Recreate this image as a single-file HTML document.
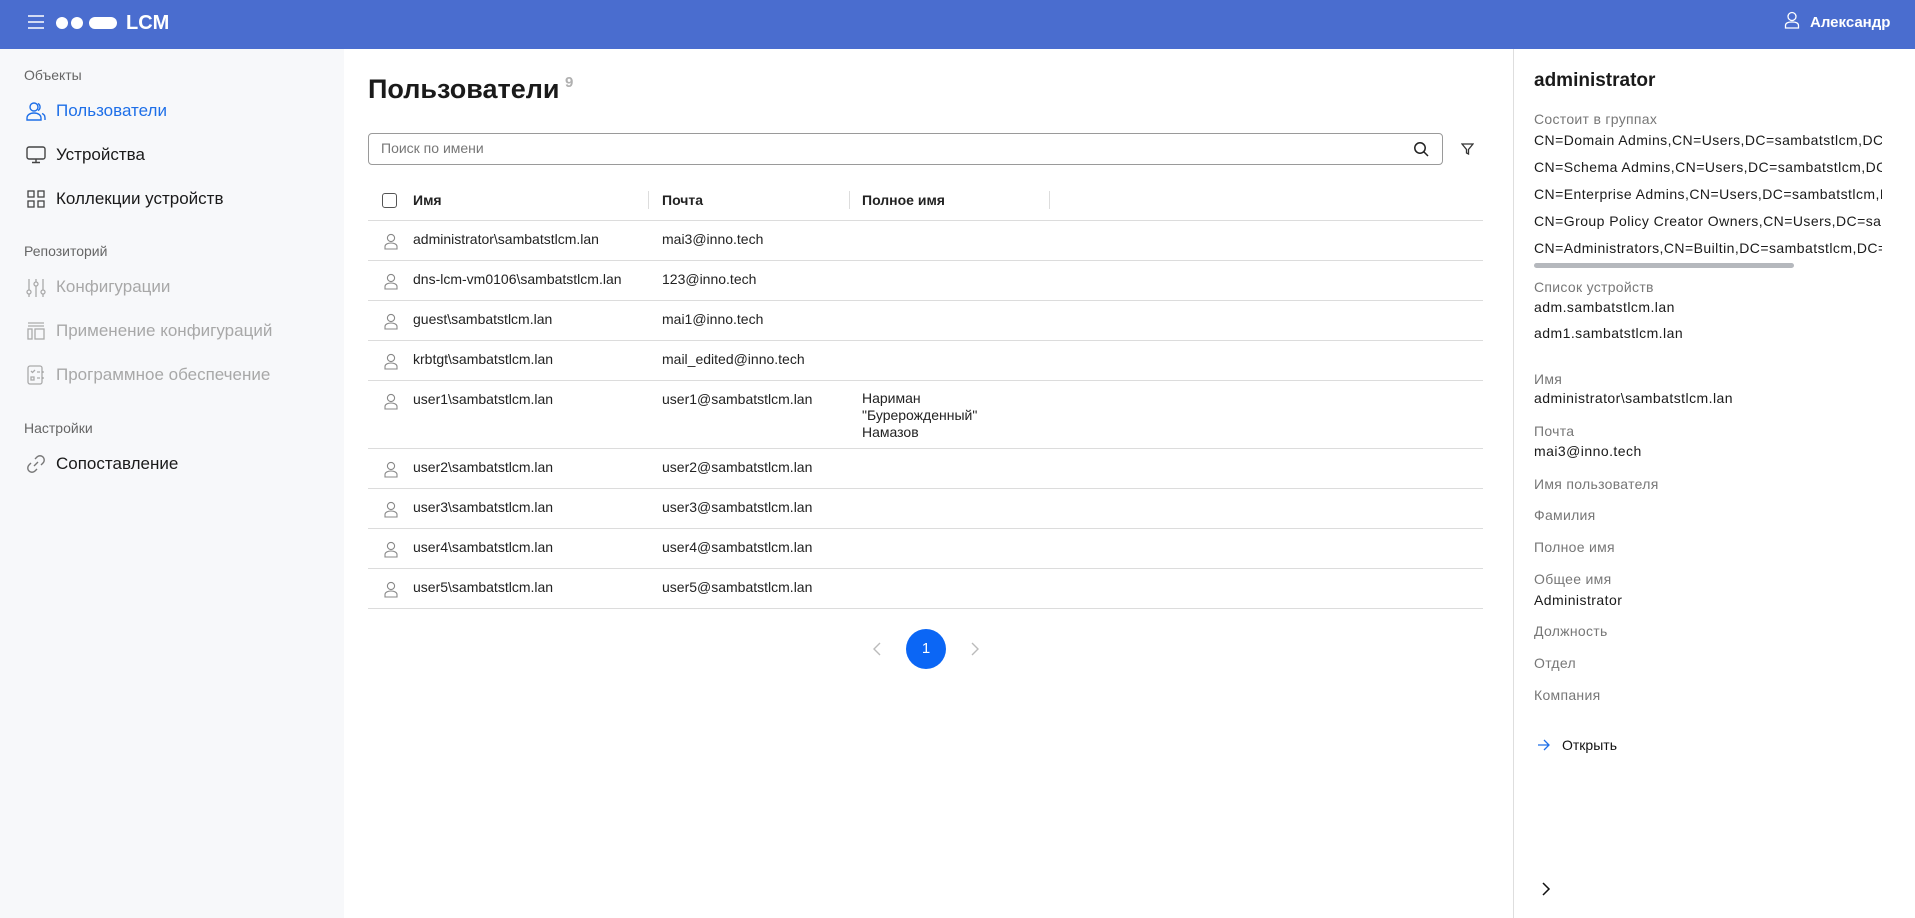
<!DOCTYPE html>
<html><head><meta charset="utf-8">
<style>
*{margin:0;padding:0;box-sizing:border-box}
body{width:1915px;height:918px;overflow:hidden;background:#fff;font-family:"Liberation Sans",Arial,sans-serif;color:#1f1f1f;position:relative}
.a{position:absolute;white-space:nowrap}
.hdr{position:absolute;left:0;top:0;width:1915px;height:49px;background:#4a6dcf}
.side{position:absolute;left:0;top:49px;width:344px;height:869px;background:#f7f8fa}
.sec{font-size:14px;color:#666}
.nav{font-size:17px;color:#1a1a1a}
.dis{color:#a8a8a8}
.ic{position:absolute}
.row{position:absolute;left:368px;width:1115px;border-bottom:1px solid #dcdcdc}
.cell{position:absolute;font-size:14px;color:#222;line-height:19px}
.rp{position:absolute;left:1513px;top:49px;width:402px;height:869px;border-left:1px solid #dedede}
.lb{font-size:14px;color:#777;letter-spacing:0.3px}
.vl{font-size:14px;color:#1a1a1a;letter-spacing:0.45px}
</style></head><body>
<div class="hdr">
 <svg class="ic" style="left:27px;top:14px" width="18" height="16" viewBox="0 0 18 16"><path d="M1 2h16M1 8h16M1 14h16" stroke="#fff" stroke-width="1.5"/></svg>
 <div class="a" style="left:56px;top:17px;width:12px;height:12px;border-radius:6px;background:#fff"></div>
 <div class="a" style="left:71px;top:17px;width:12px;height:12px;border-radius:6px;background:#fff"></div>
 <div class="a" style="left:89px;top:17px;width:28px;height:12px;border-radius:6px;background:#fff"></div>
 <div class="a" style="left:126px;top:12px;font-size:20px;font-weight:bold;color:#fff">LCM</div>
 <svg class="ic" style="left:1784px;top:11px" width="16" height="18" viewBox="0 0 16 18"><circle cx="8" cy="5.5" r="4" fill="none" stroke="#fff" stroke-width="1.3"/><path d="M1.5 17v-2.5c0-2 2-3.5 6.5-3.5s6.5 1.5 6.5 3.5V17z" fill="none" stroke="#fff" stroke-width="1.3"/></svg>
 <div class="a" style="left:1810px;top:14px;font-size:15px;font-weight:bold;color:#fff">Александр</div>
</div>
<div class="side">
 <div class="a sec" style="left:24px;top:18px">Объекты</div>
 <svg class="ic" style="left:26px;top:52px" width="20" height="20" viewBox="0 0 20 20"><circle cx="8" cy="6" r="4" fill="none" stroke="#1e6fe8" stroke-width="1.4"/><path d="M1 19v-2c0-3 3-5 7-5s7 2 7 5v2zM12 2.5a4 4 0 0 1 0 7M16 12.5c2 .7 3 2.3 3 4.5v2" fill="none" stroke="#1e6fe8" stroke-width="1.4"/></svg>
 <div class="a nav" style="left:56px;top:52px;color:#1e6fe8">Пользователи</div>
 <svg class="ic" style="left:26px;top:97px" width="20" height="18" viewBox="0 0 20 18"><rect x="1" y="1" width="18" height="12" rx="2" fill="none" stroke="#444" stroke-width="1.4"/><path d="M10 13v3M6 16.5h8" stroke="#444" stroke-width="1.4"/></svg>
 <div class="a nav" style="left:56px;top:96px">Устройства</div>
 <svg class="ic" style="left:27px;top:141px" width="18" height="18" viewBox="0 0 18 18"><g fill="none" stroke="#444" stroke-width="1.3"><rect x="1" y="1" width="6" height="6"/><rect x="11" y="1" width="6" height="6"/><rect x="1" y="11" width="6" height="6"/><rect x="11" y="11" width="6" height="6"/></g></svg>
 <div class="a nav" style="left:56px;top:140px">Коллекции устройств</div>
 <div class="a sec" style="left:24px;top:194px">Репозиторий</div>
 <svg class="ic" style="left:26px;top:229px" width="20" height="20" viewBox="0 0 20 20"><g fill="none" stroke="#aaa" stroke-width="1.3"><path d="M3 1v11M3 16v3M10 1v3M10 8v11M17 1v11M17 16v3"/><circle cx="3" cy="14" r="2"/><circle cx="10" cy="6" r="2"/><circle cx="17" cy="14" r="2"/></g></svg>
 <div class="a nav dis" style="left:56px;top:228px">Конфигурации</div>
 <svg class="ic" style="left:27px;top:273px" width="18" height="18" viewBox="0 0 18 18"><g fill="none" stroke="#aaa" stroke-width="1.3"><path d="M1 1h16M1 4h16"/><rect x="1" y="7" width="4" height="10"/><rect x="8" y="7" width="9" height="10"/></g></svg>
 <div class="a nav dis" style="left:56px;top:272px">Применение конфигураций</div>
 <svg class="ic" style="left:27px;top:316px" width="18" height="20" viewBox="0 0 18 20"><g fill="none" stroke="#aaa" stroke-width="1.3"><rect x="1" y="1" width="14" height="18" rx="2"/><path d="M4 6l1.5 1.5L8 5M10 7h3M4 12h3v3H4zM10 13h3M16 6v2M16 12v2"/></g></svg>
 <div class="a nav dis" style="left:56px;top:316px">Программное обеспечение</div>
 <div class="a sec" style="left:24px;top:371px">Настройки</div>
 <svg class="ic" style="left:26px;top:405px" width="20" height="20" viewBox="0 0 20 20"><g fill="none" stroke="#777" stroke-width="1.4"><path d="M8 12l4-4M9 5l2-2a4 4 0 0 1 6 6l-2 2M11 15l-2 2a4 4 0 0 1-6-6l2-2"/></g></svg>
 <div class="a nav" style="left:56px;top:405px">Сопоставление</div>
</div>

<div class="a" style="left:368px;top:74px;font-size:27px;font-weight:bold;color:#1a1a1a">Пользователи</div>
<div class="a" style="left:565px;top:74px;font-size:15px;font-weight:bold;color:#b0b0b0">9</div>
<div class="a" style="left:368px;top:133px;width:1075px;height:32px;border:1px solid #9a9a9a;border-radius:4px"></div>
<div class="a" style="left:381px;top:140px;font-size:14px;color:#777">Поиск по имени</div>
<svg class="ic" style="left:1413px;top:141px" width="16" height="16" viewBox="0 0 16 16"><circle cx="7" cy="7" r="5.2" fill="none" stroke="#222" stroke-width="1.5"/><path d="M11 11l4 4" stroke="#222" stroke-width="1.5"/></svg>
<svg class="ic" style="left:1461px;top:143px" width="13" height="12" viewBox="0 0 13 12"><path d="M1 1h11L7.5 6.5V11L5.5 10V6.5z" fill="none" stroke="#333" stroke-width="1.3"/></svg>

<div class="row" style="top:180px;height:41px"></div>
<div class="a" style="left:382px;top:193px;width:15px;height:15px;border:1.3px solid #555;border-radius:3px"></div>
<div class="cell" style="left:413px;top:191px;font-weight:bold">Имя</div>
<div class="a" style="left:648px;top:191px;width:1px;height:18px;background:#ddd"></div>
<div class="cell" style="left:662px;top:191px;font-weight:bold">Почта</div>
<div class="a" style="left:849px;top:191px;width:1px;height:18px;background:#ddd"></div>
<div class="cell" style="left:862px;top:191px;font-weight:bold">Полное имя</div>
<div class="a" style="left:1049px;top:191px;width:1px;height:18px;background:#ddd"></div>

<div class="row" style="top:221px;height:40px"></div>
<div class="row" style="top:261px;height:40px"></div>
<div class="row" style="top:301px;height:40px"></div>
<div class="row" style="top:341px;height:40px"></div>
<div class="row" style="top:381px;height:68px"></div>
<div class="row" style="top:449px;height:40px"></div>
<div class="row" style="top:489px;height:40px"></div>
<div class="row" style="top:529px;height:40px"></div>
<div class="row" style="top:569px;height:40px"></div>

<svg width="0" height="0" style="position:absolute"><defs><g id="u"><circle cx="7" cy="5" r="3.6" fill="none" stroke="#888" stroke-width="1.1"/><path d="M1 16v-2.5c0-2 2.5-3.5 6-3.5s6 1.5 6 3.5V16z" fill="none" stroke="#888" stroke-width="1.1"/></g></defs></svg>
<svg class="ic" style="left:384px;top:233px" width="14" height="17"><use href="#u"/></svg>
<svg class="ic" style="left:384px;top:273px" width="14" height="17"><use href="#u"/></svg>
<svg class="ic" style="left:384px;top:313px" width="14" height="17"><use href="#u"/></svg>
<svg class="ic" style="left:384px;top:353px" width="14" height="17"><use href="#u"/></svg>
<svg class="ic" style="left:384px;top:393px" width="14" height="17"><use href="#u"/></svg>
<svg class="ic" style="left:384px;top:461px" width="14" height="17"><use href="#u"/></svg>
<svg class="ic" style="left:384px;top:501px" width="14" height="17"><use href="#u"/></svg>
<svg class="ic" style="left:384px;top:541px" width="14" height="17"><use href="#u"/></svg>
<svg class="ic" style="left:384px;top:581px" width="14" height="17"><use href="#u"/></svg>

<div class="cell" style="left:413px;top:230px">administrator\sambatstlcm.lan</div><div class="cell" style="left:662px;top:230px">mai3@inno.tech</div>
<div class="cell" style="left:413px;top:270px">dns-lcm-vm0106\sambatstlcm.lan</div><div class="cell" style="left:662px;top:270px">123@inno.tech</div>
<div class="cell" style="left:413px;top:310px">guest\sambatstlcm.lan</div><div class="cell" style="left:662px;top:310px">mai1@inno.tech</div>
<div class="cell" style="left:413px;top:350px">krbtgt\sambatstlcm.lan</div><div class="cell" style="left:662px;top:350px">mail_edited@inno.tech</div>
<div class="cell" style="left:413px;top:390px">user1\sambatstlcm.lan</div><div class="cell" style="left:662px;top:390px">user1@sambatstlcm.lan</div>
<div class="cell" style="left:862px;top:390px;white-space:normal;line-height:17px">Нариман<br>"Бурерожденный"<br>Намазов</div>
<div class="cell" style="left:413px;top:458px">user2\sambatstlcm.lan</div><div class="cell" style="left:662px;top:458px">user2@sambatstlcm.lan</div>
<div class="cell" style="left:413px;top:498px">user3\sambatstlcm.lan</div><div class="cell" style="left:662px;top:498px">user3@sambatstlcm.lan</div>
<div class="cell" style="left:413px;top:538px">user4\sambatstlcm.lan</div><div class="cell" style="left:662px;top:538px">user4@sambatstlcm.lan</div>
<div class="cell" style="left:413px;top:578px">user5\sambatstlcm.lan</div><div class="cell" style="left:662px;top:578px">user5@sambatstlcm.lan</div>

<svg class="ic" style="left:872px;top:641px" width="10" height="16" viewBox="0 0 10 16"><path d="M8 2L2 8l6 6" fill="none" stroke="#bbb" stroke-width="1.4"/></svg>
<div class="a" style="left:906px;top:629px;width:40px;height:40px;border-radius:20px;background:#0b66f5;color:#fff;font-size:15px;text-align:center;line-height:40px">1</div>
<svg class="ic" style="left:970px;top:641px" width="10" height="16" viewBox="0 0 10 16"><path d="M2 2l6 6-6 6" fill="none" stroke="#bbb" stroke-width="1.4"/></svg>

<div class="rp"></div>
<div class="a" style="left:1534px;top:70px;font-size:19px;font-weight:bold;color:#1a1a1a">administrator</div>
<div class="a" style="left:1534px;top:49px;width:348px;height:869px;overflow:hidden;white-space:normal">
 <div class="a lb" style="left:0;top:62px">Состоит в группах</div>
 <div class="a vl" style="left:0;top:83px">CN=Domain Admins,CN=Users,DC=sambatstlcm,DC=lan</div>
 <div class="a vl" style="left:0;top:110px">CN=Schema Admins,CN=Users,DC=sambatstlcm,DC=lan</div>
 <div class="a vl" style="left:0;top:137px">CN=Enterprise Admins,CN=Users,DC=sambatstlcm,DC=lan</div>
 <div class="a vl" style="left:0;top:164px">CN=Group Policy Creator Owners,CN=Users,DC=sambatstlcm,DC=lan</div>
 <div class="a vl" style="left:0;top:191px">CN=Administrators,CN=Builtin,DC=sambatstlcm,DC=lan</div>
 <div class="a" style="left:0;top:214px;width:260px;height:5px;border-radius:3px;background:#b5b8bd"></div>
 <div class="a lb" style="left:0;top:230px">Список устройств</div>
 <div class="a vl" style="left:0;top:250px">adm.sambatstlcm.lan</div>
 <div class="a vl" style="left:0;top:276px">adm1.sambatstlcm.lan</div>
 <div class="a lb" style="left:0;top:322px">Имя</div>
 <div class="a vl" style="left:0;top:341px">administrator\sambatstlcm.lan</div>
 <div class="a lb" style="left:0;top:374px">Почта</div>
 <div class="a vl" style="left:0;top:394px">mai3@inno.tech</div>
 <div class="a lb" style="left:0;top:427px">Имя пользователя</div>
 <div class="a lb" style="left:0;top:458px">Фамилия</div>
 <div class="a lb" style="left:0;top:490px">Полное имя</div>
 <div class="a lb" style="left:0;top:522px">Общее имя</div>
 <div class="a vl" style="left:0;top:543px">Administrator</div>
 <div class="a lb" style="left:0;top:574px">Должность</div>
 <div class="a lb" style="left:0;top:606px">Отдел</div>
 <div class="a lb" style="left:0;top:638px">Компания</div>
</div>
<svg class="ic" style="left:1537px;top:739px" width="13" height="12" viewBox="0 0 13 12"><path d="M1 6h11M7 1l5 5-5 5" fill="none" stroke="#1e6fe8" stroke-width="1.3"/></svg>
<div class="a" style="left:1562px;top:737px;font-size:14px;color:#111">Открыть</div>
<svg class="ic" style="left:1541px;top:881px" width="10" height="16" viewBox="0 0 10 16"><path d="M2 2l6 6-6 6" fill="none" stroke="#111" stroke-width="1.5"/></svg>
</body></html>
